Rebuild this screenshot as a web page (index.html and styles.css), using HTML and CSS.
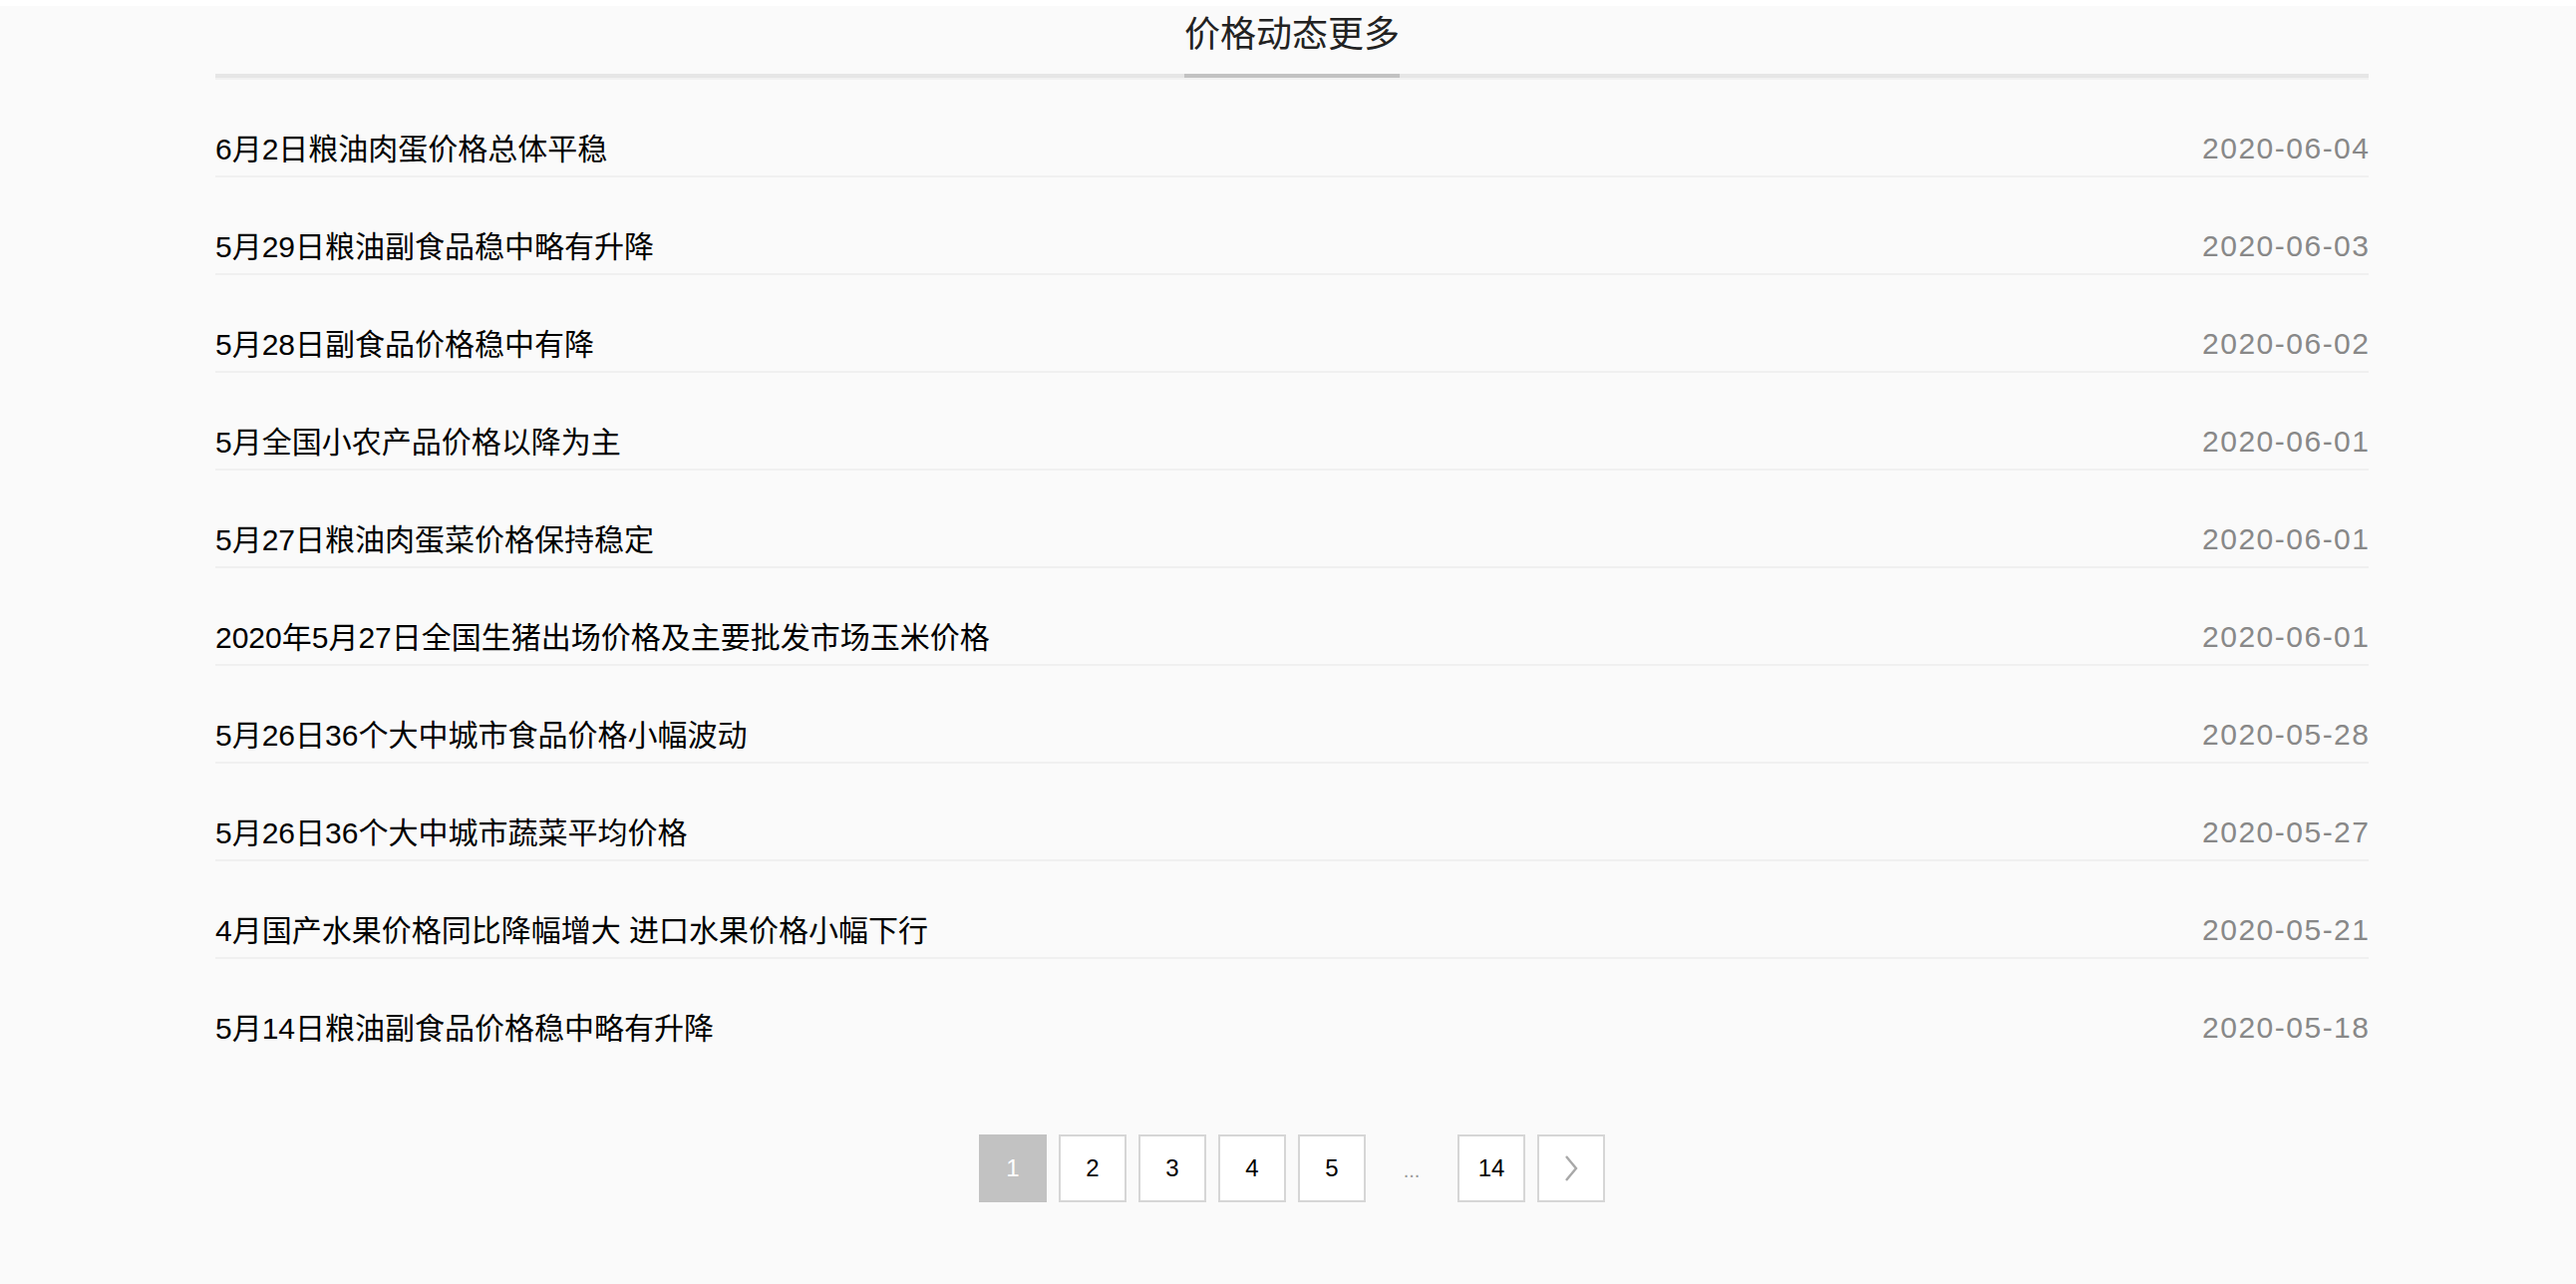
FILE: index.html
```html
<!DOCTYPE html>
<html lang="zh-CN">
<head>
<meta charset="utf-8">
<title>价格动态更多</title>
<link rel="stylesheet" href="styles.css">
</head>
<body>
<div class="topband"></div>
<main class="wrap">
  <div class="head">
    <h2 class="tab">价格动态更多</h2>
  </div>
  <ul class="list">
    <li class="row"><span class="t">6月2日粮油肉蛋价格总体平稳</span><span class="d">2020-06-04</span></li>
    <li class="row"><span class="t">5月29日粮油副食品稳中略有升降</span><span class="d">2020-06-03</span></li>
    <li class="row"><span class="t">5月28日副食品价格稳中有降</span><span class="d">2020-06-02</span></li>
    <li class="row"><span class="t">5月全国小农产品价格以降为主</span><span class="d">2020-06-01</span></li>
    <li class="row"><span class="t">5月27日粮油肉蛋菜价格保持稳定</span><span class="d">2020-06-01</span></li>
    <li class="row"><span class="t">2020年5月27日全国生猪出场价格及主要批发市场玉米价格</span><span class="d">2020-06-01</span></li>
    <li class="row"><span class="t">5月26日36个大中城市食品价格小幅波动</span><span class="d">2020-05-28</span></li>
    <li class="row"><span class="t">5月26日36个大中城市蔬菜平均价格</span><span class="d">2020-05-27</span></li>
    <li class="row"><span class="t">4月国产水果价格同比降幅增大 进口水果价格小幅下行</span><span class="d">2020-05-21</span></li>
    <li class="row"><span class="t">5月14日粮油副食品价格稳中略有升降</span><span class="d">2020-05-18</span></li>
  </ul>
  <nav class="pager">
    <span class="pg active">1</span>
    <span class="pg">2</span>
    <span class="pg">3</span>
    <span class="pg">4</span>
    <span class="pg">5</span>
    <span class="pg dots">...</span>
    <span class="pg">14</span>
    <span class="pg next"><svg width="16" height="28" viewBox="0 0 16 28"><path d="M3 2 L13 14 L3 26" fill="none" stroke="#a8a8a8" stroke-width="2.4"/></svg></span>
  </nav>
</main>
</body>
</html>
```

FILE: styles.css
```css
html, body {
  margin: 0;
  padding: 0;
}
body {
  background: #fafafa;
  font-family: "Liberation Sans", "Noto Sans CJK SC", sans-serif;
  color: #000;
}
.topband {
  height: 6px;
  background: #fff;
}
.wrap {
  width: 2160px;
  margin-left: 216px;
}
.head {
  display: flex;
  justify-content: center;
  border-bottom: 4px solid #e6e6e6;
  box-shadow: 0 2px 0 #f1f1f1;
  margin-bottom: 2px;
}
.tab {
  margin: 0 0 -4px 0;
  font-weight: normal;
  font-size: 36px;
  line-height: 54px;
  padding-top: 2px;
  padding-bottom: 12px;
  color: #222;
  border-bottom: 4px solid #c2c2c2;
}
.list {
  list-style: none;
  margin: 0;
  padding: 0;
}
.row {
  display: flex;
  justify-content: space-between;
  align-items: center;
  padding: 50px 0 6px;
  line-height: 40px;
  border-bottom: 2px solid #f0f0f0;
}
.row:last-child {
  border-bottom: none;
}
.t {
  font-size: 30px;
  color: #000;
}
.d {
  font-size: 30px;
  color: #888;
  letter-spacing: 1.5px;
  margin-right: -1.5px;
  position: relative;
  top: -1px;
}
.pager {
  display: flex;
  justify-content: center;
  gap: 12px;
  margin-top: 80px;
}
.pg {
  box-sizing: border-box;
  width: 68px;
  height: 68px;
  display: flex;
  align-items: center;
  justify-content: center;
  border: 2px solid #d6d6d6;
  background: #fff;
  font-size: 24px;
  color: #000;
}
.pg.active {
  background: #c2c2c2;
  border-color: #c2c2c2;
  color: #fff;
}
.pg.dots {
  border: none;
  background: transparent;
  color: #999;
  font-size: 20px;
  padding-top: 4px;
}
.pg.next svg {
  display: block;
}
```
